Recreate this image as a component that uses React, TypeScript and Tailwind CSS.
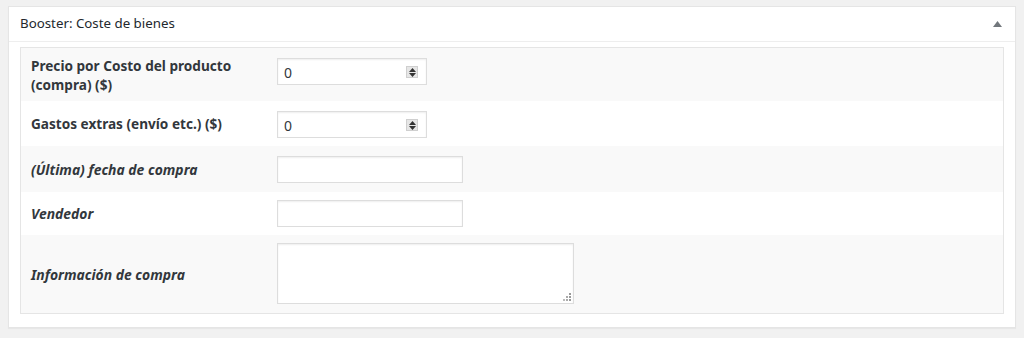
import React from 'react';

const font = { fontFamily: '"Noto Sans", "Open Sans", sans-serif' };

interface Field {
  label: React.ReactNode;
  kind: 'number' | 'text' | 'textarea';
  italic?: boolean;
  shade: boolean;
  h: string;
  top: string;
}

const NumberInput = () => (
  <div className="relative w-[150px] h-[27px] bg-white border border-[#dddddd] shadow-[inset_0_1px_2px_rgba(0,0,0,0.07)]">
    <span className="absolute left-[6px] top-[3px] text-[14px] text-[#32373c]">0</span>
    {/* spinner */}
    <div className="absolute right-[8px] top-[7px] w-[12px] h-[12px] bg-[#e6e6e6] border border-[#cfcfcf] flex flex-col items-center justify-center gap-[1px]">
      <svg width="7" height="4" viewBox="0 0 7 4"><path d="M0 4 L3.5 0 L7 4 Z" fill="#333" /></svg>
      <svg width="7" height="4" viewBox="0 0 7 4"><path d="M0 0 L3.5 4 L7 0 Z" fill="#333" /></svg>
    </div>
  </div>
);

// dotted resize grip like the one on the textarea
const Grip = () => (
  <svg className="absolute right-[3px] bottom-[3px]" width="8" height="8" viewBox="0 0 8 8">
    <rect x="6" y="0" width="2" height="2" fill="#999" />
    <rect x="6" y="3" width="2" height="2" fill="#999" />
    <rect x="6" y="6" width="2" height="2" fill="#999" />
    <rect x="3" y="3" width="2" height="2" fill="#aaa" />
    <rect x="3" y="6" width="2" height="2" fill="#aaa" />
    <rect x="0" y="6" width="2" height="2" fill="#bbb" />
  </svg>
);

export default function App() {
  const fields: Field[] = [
    { label: <>Precio por Costo del producto<br />(compra) ($)</>, kind: 'number', shade: true, h: 'h-[53px]', top: 'mt-[10px]' },
    { label: 'Gastos extras (envío etc.) ($)', kind: 'number', shade: false, h: 'h-[45px]', top: 'mt-[10px]' },
    { label: '(Última) fecha de compra', kind: 'text', italic: true, shade: true, h: 'h-[46px]', top: 'mt-[10px]' },
    { label: 'Vendedor', kind: 'text', italic: true, shade: false, h: 'h-[43px]', top: 'mt-[8px]' },
    { label: 'Información de compra', kind: 'textarea', italic: true, shade: true, h: 'h-[78px]', top: 'mt-[8px]' },
  ];

  return (
    <div className="w-[1024px] h-[338px] bg-[#f1f1f1] pt-[6px] pl-[8px]" style={font}>
      <div className="w-[1008px] h-[322px] bg-white border border-[#e5e5e5] shadow-[0_1px_1px_rgba(0,0,0,0.04)]">
        {/* header */}
        <div className="h-[35px] flex items-center justify-between pl-[11px] pr-[13px] border-b border-[#eeeeee]">
          <span className="text-[13.3px] text-[#23282d]">Booster: Coste de bienes</span>
          <svg width="9" height="6" viewBox="0 0 9 6"><path d="M0 6 L4.5 0 L9 6 Z" fill="#72777c" /></svg>
        </div>

        {/* table */}
        <div className="mx-[11px] mt-[5px] border border-[#e5e5e5]">
          {fields.map((f, i) => (
            <div key={i} className={`flex items-center ${f.h} ${f.shade ? 'bg-[#f9f9f9]' : 'bg-white'}`}>
              <div
                className={`w-[256px] pl-[10px] pr-[10px] font-bold leading-[19px] text-[#32373c] ${
                  f.italic ? 'italic text-[13.9px]' : 'text-[13.6px]'
                }`}
              >
                {f.label}
              </div>
              <div className={`self-start ${f.top}`}>
                {f.kind === 'number' && <NumberInput />}
                {f.kind === 'text' && (
                  <input
                    type="text"
                    className="block w-[186px] h-[27px] bg-white border border-[#dddddd] shadow-[inset_0_1px_2px_rgba(0,0,0,0.07)] outline-none"
                  />
                )}
                {f.kind === 'textarea' && (
                  <div className="relative w-[297px] h-[61px]">
                    <textarea className="block w-full h-full resize-none bg-white border border-[#dddddd] shadow-[inset_0_1px_2px_rgba(0,0,0,0.07)] outline-none" />
                    <Grip />
                  </div>
                )}
              </div>
            </div>
          ))}
        </div>
      </div>
    </div>
  );
}
